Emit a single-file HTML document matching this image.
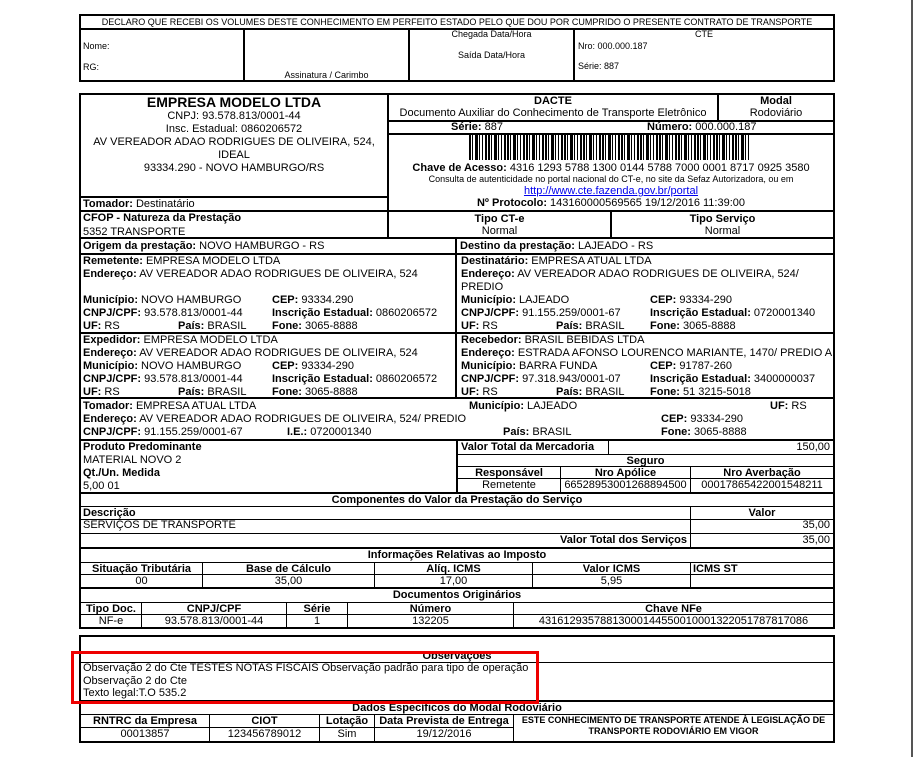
<!DOCTYPE html>
<html><head><meta charset="utf-8"><style>
*{margin:0;padding:0;box-sizing:border-box}
body{width:913px;height:757px;background:#fff;position:relative;overflow:hidden;font-family:"Liberation Sans",Arial,sans-serif;color:#000;font-size:11px}
.a{position:absolute;white-space:nowrap;line-height:12px}
.h{position:absolute;height:2px;background:#000}
.v{position:absolute;width:2px;background:#000}
.hl{position:absolute;height:1px;background:#000}
.vl{position:absolute;width:1px;background:#000}
.c{text-align:center}
.r{text-align:right}
b{font-weight:bold}
.s9{font-size:9px}
</style></head><body>
<div style="position:absolute;left:911px;top:0;width:2px;height:757px;background:#555"></div>

<!-- top box -->
<div style="position:absolute;left:79px;top:14px;width:756px;height:68px;border:2px solid #000"></div>
<div class="h" style="left:79px;top:28px;width:756px"></div>
<div class="v" style="left:243px;top:28px;height:54px"></div>
<div class="v" style="left:408px;top:28px;height:54px"></div>
<div class="v" style="left:573px;top:28px;height:54px"></div>
<div class="a c s9" style="left:81px;top:16px;width:752px">DECLARO QUE RECEBI OS VOLUMES DESTE CONHECIMENTO EM PERFEITO ESTADO PELO QUE DOU POR CUMPRIDO O PRESENTE CONTRATO DE TRANSPORTE</div>
<div class="a s9" style="left:83px;top:40px">Nome:</div>
<div class="a s9" style="left:83px;top:61px">RG:</div>
<div class="a c s9" style="left:245px;top:69px;width:163px">Assinatura / Carimbo</div>
<div class="a c s9" style="left:410px;top:28px;width:163px">Chegada Data/Hora</div>
<div class="a c s9" style="left:410px;top:49px;width:163px">Saída Data/Hora</div>
<div class="a c s9" style="left:575px;top:28px;width:258px">CTE</div>
<div class="a s9" style="left:578px;top:40px">Nro: 000.000.187</div>
<div class="a s9" style="left:578px;top:60px">Série: 887</div>

<!-- main box -->
<div style="position:absolute;left:79px;top:93px;width:756px;height:536px;border:2px solid #000"></div>
<div class="v" style="left:387px;top:93px;height:146px"></div>
<div class="v" style="left:717px;top:93px;height:28px"></div>
<div class="h" style="left:387px;top:120px;width:448px"></div>
<div class="h" style="left:387px;top:133px;width:448px"></div>
<div class="h" style="left:79px;top:196px;width:309px"></div>
<div class="h" style="left:79px;top:210px;width:756px"></div>
<div class="v" style="left:610px;top:210px;height:29px"></div>
<div class="h" style="left:79px;top:237px;width:756px"></div>
<div class="v" style="left:455px;top:237px;height:161px"></div>
<div class="h" style="left:79px;top:253px;width:756px"></div>
<div class="h" style="left:79px;top:332px;width:756px"></div>
<div class="h" style="left:79px;top:397px;width:756px"></div>
<div class="h" style="left:79px;top:439px;width:756px"></div>

<div class="a c" style="left:81px;top:95px;width:306px;font-size:14px;font-weight:bold;line-height:15px">EMPRESA MODELO LTDA</div>
<div class="a c" style="left:81px;top:110px;width:306px;font-size:11px;line-height:13px">CNPJ: 93.578.813/0001-44<br>Insc. Estadual: 0860206572<br>AV VEREADOR ADAO RODRIGUES DE OLIVEIRA, 524,<br>IDEAL<br>93334.290 - NOVO HAMBURGO/RS</div>
<div class="a" style="left:83px;top:198px"><b>Tomador:</b> Destinatário</div>
<div class="a" style="left:83px;top:212px"><b>CFOP - Natureza da Prestação</b></div>
<div class="a" style="left:83px;top:226px">5352 TRANSPORTE</div>

<div class="a c" style="left:389px;top:95px;width:328px"><b>DACTE</b><br>Documento Auxiliar do Conhecimento de Transporte Eletrônico</div>
<div class="a c" style="left:719px;top:95px;width:114px"><b>Modal</b><br>Rodoviário</div>
<div class="a" style="left:451px;top:121px"><b>Série:</b> 887</div>
<div class="a" style="left:647px;top:121px"><b>Número:</b> 000.000.187</div>
<div style="position:absolute;left:469px;top:135px;width:281px;height:25px;background:repeating-linear-gradient(90deg,#000 0 2px,#fff 2px 3px,#000 3px 4px,#fff 4px 6px,#000 6px 9px,#fff 9px 10px,#000 10px 11px,#fff 11px 13px,#000 13px 14px,#fff 14px 16px,#000 16px 18px,#fff 18px 19px)"></div>
<div class="a c" style="left:389px;top:162px;width:444px"><b>Chave de Acesso:</b> 4316 1293 5788 1300 0144 5788 7000 0001 8717 0925 3580</div>
<div class="a c s9" style="left:389px;top:174px;width:444px;line-height:11px">Consulta de autenticidade no portal nacional do CT-e, no site da Sefaz Autorizadora, ou em</div>
<div class="a c" style="left:389px;top:185px;width:444px;color:#00e;text-decoration:underline">http://www.cte.fazenda.gov.br/portal</div>
<div class="a c" style="left:389px;top:197px;width:444px"><b>Nº Protocolo:</b> 143160000569565 19/12/2016 11:39:00</div>
<div class="a c" style="left:389px;top:213px;width:221px"><b>Tipo CT-e</b><br>Normal</div>
<div class="a c" style="left:612px;top:213px;width:221px"><b>Tipo Serviço</b><br>Normal</div>

<div class="a" style="left:83px;top:240px"><b>Origem da prestação:</b> NOVO HAMBURGO - RS</div>
<div class="a" style="left:460px;top:240px"><b>Destino da prestação:</b> LAJEADO - RS</div>

<div class="a" style="left:83px;top:255px;line-height:13px"><b>Remetente:</b> EMPRESA MODELO LTDA<br><b>Endereço:</b> AV VEREADOR ADAO RODRIGUES DE OLIVEIRA, 524</div>
<div class="a" style="left:83px;top:294px;line-height:13px"><b>Município:</b> NOVO HAMBURGO<br><b>CNPJ/CPF:</b> 93.578.813/0001-44<br><b>UF:</b> RS</div>
<div class="a" style="left:178px;top:320px"><b>País:</b> BRASIL</div>
<div class="a" style="left:272px;top:294px;line-height:13px"><b>CEP:</b> 93334.290<br><b>Inscrição Estadual:</b> 0860206572<br><b>Fone:</b> 3065-8888</div>

<div class="a" style="left:461px;top:255px;line-height:13px"><b>Destinatário:</b> EMPRESA ATUAL LTDA<br><b>Endereço:</b> AV VEREADOR ADAO RODRIGUES DE OLIVEIRA, 524/<br>PREDIO<br><b>Município:</b> LAJEADO<br><b>CNPJ/CPF:</b> 91.155.259/0001-67<br><b>UF:</b> RS</div>
<div class="a" style="left:556px;top:320px"><b>País:</b> BRASIL</div>
<div class="a" style="left:650px;top:294px;line-height:13px"><b>CEP:</b> 93334-290<br><b>Inscrição Estadual:</b> 0720001340<br><b>Fone:</b> 3065-8888</div>

<div class="a" style="left:83px;top:334px;line-height:13px"><b>Expedidor:</b> EMPRESA MODELO LTDA<br><b>Endereço:</b> AV VEREADOR ADAO RODRIGUES DE OLIVEIRA, 524<br><b>Município:</b> NOVO HAMBURGO<br><b>CNPJ/CPF:</b> 93.578.813/0001-44<br><b>UF:</b> RS</div>
<div class="a" style="left:178px;top:386px"><b>País:</b> BRASIL</div>
<div class="a" style="left:272px;top:360px;line-height:13px"><b>CEP:</b> 93334-290<br><b>Inscrição Estadual:</b> 0860206572<br><b>Fone:</b> 3065-8888</div>

<div class="a" style="left:461px;top:334px;line-height:13px"><b>Recebedor:</b> BRASIL BEBIDAS LTDA<br><b>Endereço:</b> ESTRADA AFONSO LOURENCO MARIANTE, 1470/ PREDIO A<br><b>Município:</b> BARRA FUNDA<br><b>CNPJ/CPF:</b> 97.318.943/0001-07<br><b>UF:</b> RS</div>
<div class="a" style="left:556px;top:386px"><b>País:</b> BRASIL</div>
<div class="a" style="left:650px;top:360px;line-height:13px"><b>CEP:</b> 91787-260<br><b>Inscrição Estadual:</b> 3400000037<br><b>Fone:</b> 51 3215-5018</div>

<div class="a" style="left:83px;top:400px;line-height:13px"><b>Tomador:</b> EMPRESA ATUAL LTDA<br><b>Endereço:</b> AV VEREADOR ADAO RODRIGUES DE OLIVEIRA, 524/ PREDIO<br><b>CNPJ/CPF:</b> 91.155.259/0001-67</div>
<div class="a" style="left:287px;top:426px"><b>I.E.:</b> 0720001340</div>
<div class="a" style="left:469px;top:400px"><b>Município:</b> LAJEADO</div>
<div class="a" style="left:770px;top:400px"><b>UF:</b> RS</div>
<div class="a" style="left:661px;top:413px;line-height:13px"><b>CEP:</b> 93334-290<br><b>Fone:</b> 3065-8888</div>
<div class="a" style="left:503px;top:426px"><b>País:</b> BRASIL</div>

<!-- produto -->
<div class="v" style="left:456px;top:439px;height:55px"></div>
<div class="hl" style="left:456px;top:454px;width:379px"></div>
<div class="hl" style="left:456px;top:466px;width:379px"></div>
<div class="hl" style="left:456px;top:478px;width:379px"></div>
<div class="vl" style="left:608px;top:439px;height:15px"></div>
<div class="vl" style="left:560px;top:466px;height:27px"></div>
<div class="vl" style="left:690px;top:466px;height:27px"></div>
<div class="h" style="left:79px;top:492px;width:756px"></div>
<div class="a" style="left:83px;top:441px;line-height:13px"><b>Produto Predominante</b><br>MATERIAL NOVO 2<br><b>Qt./Un. Medida</b><br>5,00 01</div>
<div class="a" style="left:461px;top:441px"><b>Valor Total da Mercadoria</b></div>
<div class="a r" style="left:610px;top:441px;width:220px">150,00</div>
<div class="a c" style="left:458px;top:455px;width:375px"><b>Seguro</b></div>
<div class="a c" style="left:458px;top:467px;width:102px"><b>Responsável</b></div>
<div class="a c" style="left:561px;top:467px;width:129px"><b>Nro Apólice</b></div>
<div class="a c" style="left:691px;top:467px;width:142px"><b>Nro Averbação</b></div>
<div class="a c" style="left:458px;top:479px;width:102px">Remetente</div>
<div class="a c" style="left:561px;top:479px;width:129px">66528953001268894500</div>
<div class="a c" style="left:691px;top:479px;width:142px">00017865422001548211</div>

<!-- componentes -->
<div class="a c" style="left:81px;top:494px;width:752px"><b>Componentes do Valor da Prestação do Serviço</b></div>
<div class="hl" style="left:79px;top:506px;width:756px"></div>
<div class="hl" style="left:79px;top:519px;width:756px"></div>
<div class="hl" style="left:79px;top:533px;width:756px"></div>
<div class="vl" style="left:690px;top:506px;height:42px"></div>
<div class="a" style="left:83px;top:507px"><b>Descrição</b></div>
<div class="a c" style="left:691px;top:507px;width:142px"><b>Valor</b></div>
<div class="a" style="left:83px;top:519px">SERVIÇOS DE TRANSPORTE</div>
<div class="a r" style="left:691px;top:519px;width:139px">35,00</div>
<div class="a r" style="left:450px;top:534px;width:237px"><b>Valor Total dos Serviços</b></div>
<div class="a r" style="left:691px;top:534px;width:139px">35,00</div>
<div class="h" style="left:79px;top:547px;width:756px"></div>

<div class="a c" style="left:81px;top:549px;width:752px"><b>Informações Relativas ao Imposto</b></div>
<div class="hl" style="left:79px;top:562px;width:756px"></div>
<div class="hl" style="left:79px;top:574px;width:756px"></div>
<div class="vl" style="left:202px;top:562px;height:25px"></div>
<div class="vl" style="left:374px;top:562px;height:25px"></div>
<div class="vl" style="left:532px;top:562px;height:25px"></div>
<div class="vl" style="left:690px;top:562px;height:25px"></div>
<div class="a c" style="left:81px;top:563px;width:121px"><b>Situação Tributária</b></div>
<div class="a c" style="left:203px;top:563px;width:171px"><b>Base de Cálculo</b></div>
<div class="a c" style="left:375px;top:563px;width:157px"><b>Alíq. ICMS</b></div>
<div class="a c" style="left:533px;top:563px;width:157px"><b>Valor ICMS</b></div>
<div class="a" style="left:693px;top:563px"><b>ICMS ST</b></div>
<div class="a c" style="left:81px;top:575px;width:121px">00</div>
<div class="a c" style="left:203px;top:575px;width:171px">35,00</div>
<div class="a c" style="left:375px;top:575px;width:157px">17,00</div>
<div class="a c" style="left:533px;top:575px;width:157px">5,95</div>
<div class="h" style="left:79px;top:587px;width:756px"></div>

<div class="a c" style="left:81px;top:589px;width:752px"><b>Documentos Originários</b></div>
<div class="hl" style="left:79px;top:602px;width:756px"></div>
<div class="hl" style="left:79px;top:614px;width:756px"></div>
<div class="vl" style="left:141px;top:602px;height:26px"></div>
<div class="vl" style="left:286px;top:602px;height:26px"></div>
<div class="vl" style="left:347px;top:602px;height:26px"></div>
<div class="vl" style="left:513px;top:602px;height:26px"></div>
<div class="a c" style="left:81px;top:603px;width:60px"><b>Tipo Doc.</b></div>
<div class="a c" style="left:142px;top:603px;width:144px"><b>CNPJ/CPF</b></div>
<div class="a c" style="left:287px;top:603px;width:60px"><b>Série</b></div>
<div class="a c" style="left:348px;top:603px;width:165px"><b>Número</b></div>
<div class="a c" style="left:514px;top:603px;width:319px"><b>Chave NFe</b></div>
<div class="a c" style="left:81px;top:615px;width:60px">NF-e</div>
<div class="a c" style="left:142px;top:615px;width:144px">93.578.813/0001-44</div>
<div class="a c" style="left:287px;top:615px;width:60px">1</div>
<div class="a c" style="left:348px;top:615px;width:165px">132205</div>
<div class="a c" style="left:514px;top:615px;width:319px">43161293578813000144550010001322051787817086</div>

<!-- bottom box -->
<div style="position:absolute;left:79px;top:635px;width:756px;height:108px;border:2px solid #000"></div>
<div class="hl" style="left:79px;top:662px;width:756px"></div>
<div class="h" style="left:79px;top:700px;width:756px"></div>
<div class="hl" style="left:79px;top:714px;width:756px"></div>
<div class="hl" style="left:79px;top:727px;width:434px"></div>
<div class="vl" style="left:209px;top:714px;height:28px"></div>
<div class="vl" style="left:319px;top:714px;height:28px"></div>
<div class="vl" style="left:374px;top:714px;height:28px"></div>
<div class="vl" style="left:513px;top:714px;height:28px"></div>
<div class="a c" style="left:81px;top:650px;width:752px"><b>Observaçoes</b></div>
<div class="a" style="left:83px;top:662px;line-height:12.5px">Observação 2 do Cte TESTES NOTAS FISCAIS Observação padrão para tipo de operação<br>Observação 2 do Cte<br>Texto legal:T.O 535.2</div>
<div class="a c" style="left:81px;top:702px;width:752px"><b>Dados Específicos do Modal Rodoviário</b></div>
<div class="a c" style="left:81px;top:715px;width:128px"><b>RNTRC da Empresa</b></div>
<div class="a c" style="left:210px;top:715px;width:109px"><b>CIOT</b></div>
<div class="a c" style="left:320px;top:715px;width:54px"><b>Lotação</b></div>
<div class="a c" style="left:375px;top:715px;width:138px"><b>Data Prevista de Entrega</b></div>
<div class="a c" style="left:81px;top:728px;width:128px">00013857</div>
<div class="a c" style="left:210px;top:728px;width:109px">123456789012</div>
<div class="a c" style="left:320px;top:728px;width:54px">Sim</div>
<div class="a c" style="left:375px;top:728px;width:138px">19/12/2016</div>
<div class="a c s9" style="left:514px;top:715px;width:319px;line-height:11px"><b>ESTE CONHECIMENTO DE TRANSPORTE ATENDE À LEGISLAÇÃO DE<br>TRANSPORTE RODOVIÁRIO EM VIGOR</b></div>

<!-- red highlight -->
<div style="position:absolute;left:71px;top:651px;width:468px;height:53px;border:3px solid #e00"></div>
</body></html>
